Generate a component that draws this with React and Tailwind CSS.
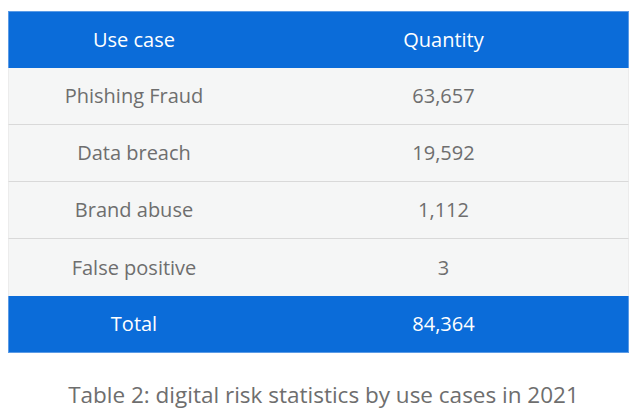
import React from 'react';

const rows = [
  { name: 'Phishing Fraud', qty: '63,657' },
  { name: 'Data breach', qty: '19,592' },
  { name: 'Brand abuse', qty: '1,112' },
  { name: 'False positive', qty: '3' },
];

const App = () => {
  return (
    <div className="w-[642px] h-[419px] bg-white pt-[11px] pl-[8px] font-['Open_Sans',sans-serif]">
      <div className="w-[621px]">
        <div className="grid grid-cols-[250px_1fr] h-[57px] bg-[#0b6cd9] text-white text-[20px] border border-b-0 border-[#5b9be6]">
          <div className="flex items-center justify-center">Use case</div>
          <div className="flex items-center justify-center">Quantity</div>
        </div>
        {rows.map((r, i) => (
          <div
            key={r.name}
            className={`grid grid-cols-[250px_1fr] h-[57px] bg-[#f5f6f6] text-[#6e6e6e] text-[20px] border-x border-x-[#ececec] ${i < rows.length - 1 ? 'border-b border-b-[#d9d9d9]' : ''}`}
          >
            <div className="flex items-center justify-center">{r.name}</div>
            <div className="flex items-center justify-center">{r.qty}</div>
          </div>
        ))}
        <div className="grid grid-cols-[250px_1fr] h-[57px] bg-[#0b6cd9] text-white text-[20px] border border-t-0 border-[#5b9be6]">
          <div className="flex items-center justify-center">Total</div>
          <div className="flex items-center justify-center">84,364</div>
        </div>
      </div>
      <div className="w-[621px] mt-[25px] pl-[10px] text-center text-[22.5px] text-[#6e6e6e]">
        Table 2: digital risk statistics by use cases in 2021
      </div>
    </div>
  );
};

export default App;
